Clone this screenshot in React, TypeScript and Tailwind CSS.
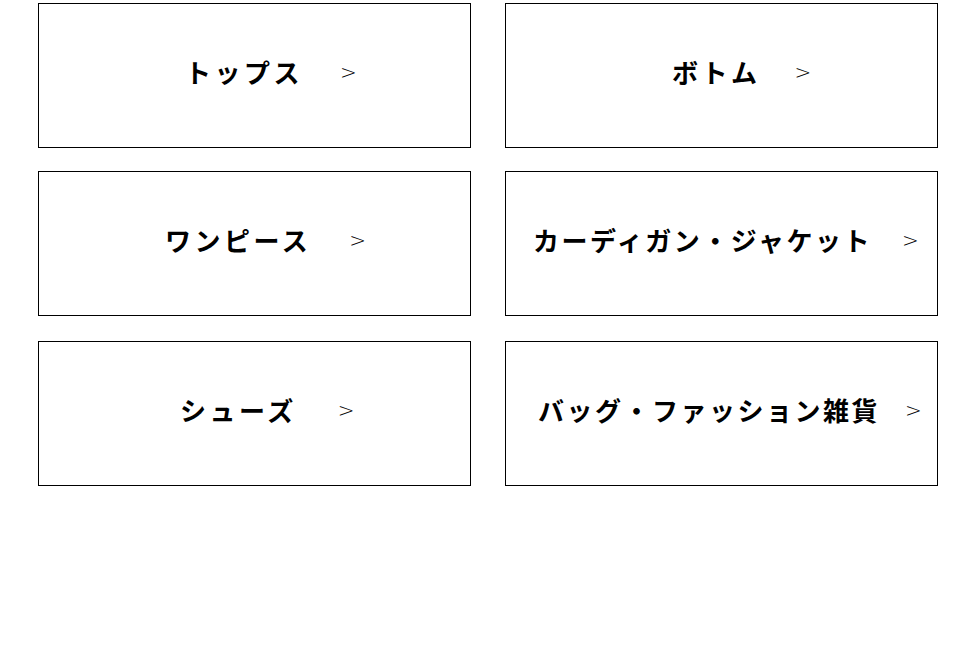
import React from "react";

type Item = { label: string; pl: string; ml: string; tr: string };

const Box = ({ label, pl, ml, tr }: Item) => (
  <a
    href="#"
    className={`flex h-[145px] w-[433px] items-center border border-black bg-white pb-[8px] text-black no-underline ${pl}`}
  >
    <span className={`whitespace-nowrap text-[26px] font-bold leading-none ${tr}`}>
      {label}
    </span>
    <span
      className={`text-[20px] font-extralight leading-none ${ml}`}
      style={{ fontFamily: '"DejaVu Sans", sans-serif' }}
    >
      &gt;
    </span>
  </a>
);

export default function App() {
  return (
    <div
      className="min-h-[665px] w-[980px] bg-white"
      style={{ fontFamily: '"Noto Sans CJK JP", "Noto Sans", sans-serif' }}
    >
      <div className="flex flex-col pl-[38px] pt-[3px]">
        <div className="flex gap-[34px]">
          <Box label="トップス" pl="pl-[146px]" ml="ml-[37px]" tr="tracking-[3.5px]" />
          <Box label="ボトム" pl="pl-[166px]" ml="ml-[34px]" tr="tracking-[3.5px]" />
        </div>
        <div className="mt-[23px] flex gap-[34px]">
          <Box label="ワンピース" pl="pl-[126px]" ml="ml-[38px]" tr="tracking-[3.5px]" />
          <Box label="カーディガン・ジャケット" pl="pl-[27px]" ml="ml-[30px]" tr="tracking-[2.5px]" />
        </div>
        <div className="mt-[25px] flex gap-[34px]">
          <Box label="シューズ" pl="pl-[141px]" ml="ml-[41px]" tr="tracking-[3.5px]" />
          <Box label="バッグ・ファッション雑貨" pl="pl-[32px]" ml="ml-[25px]" tr="tracking-[2.5px]" />
        </div>
      </div>
    </div>
  );
}
